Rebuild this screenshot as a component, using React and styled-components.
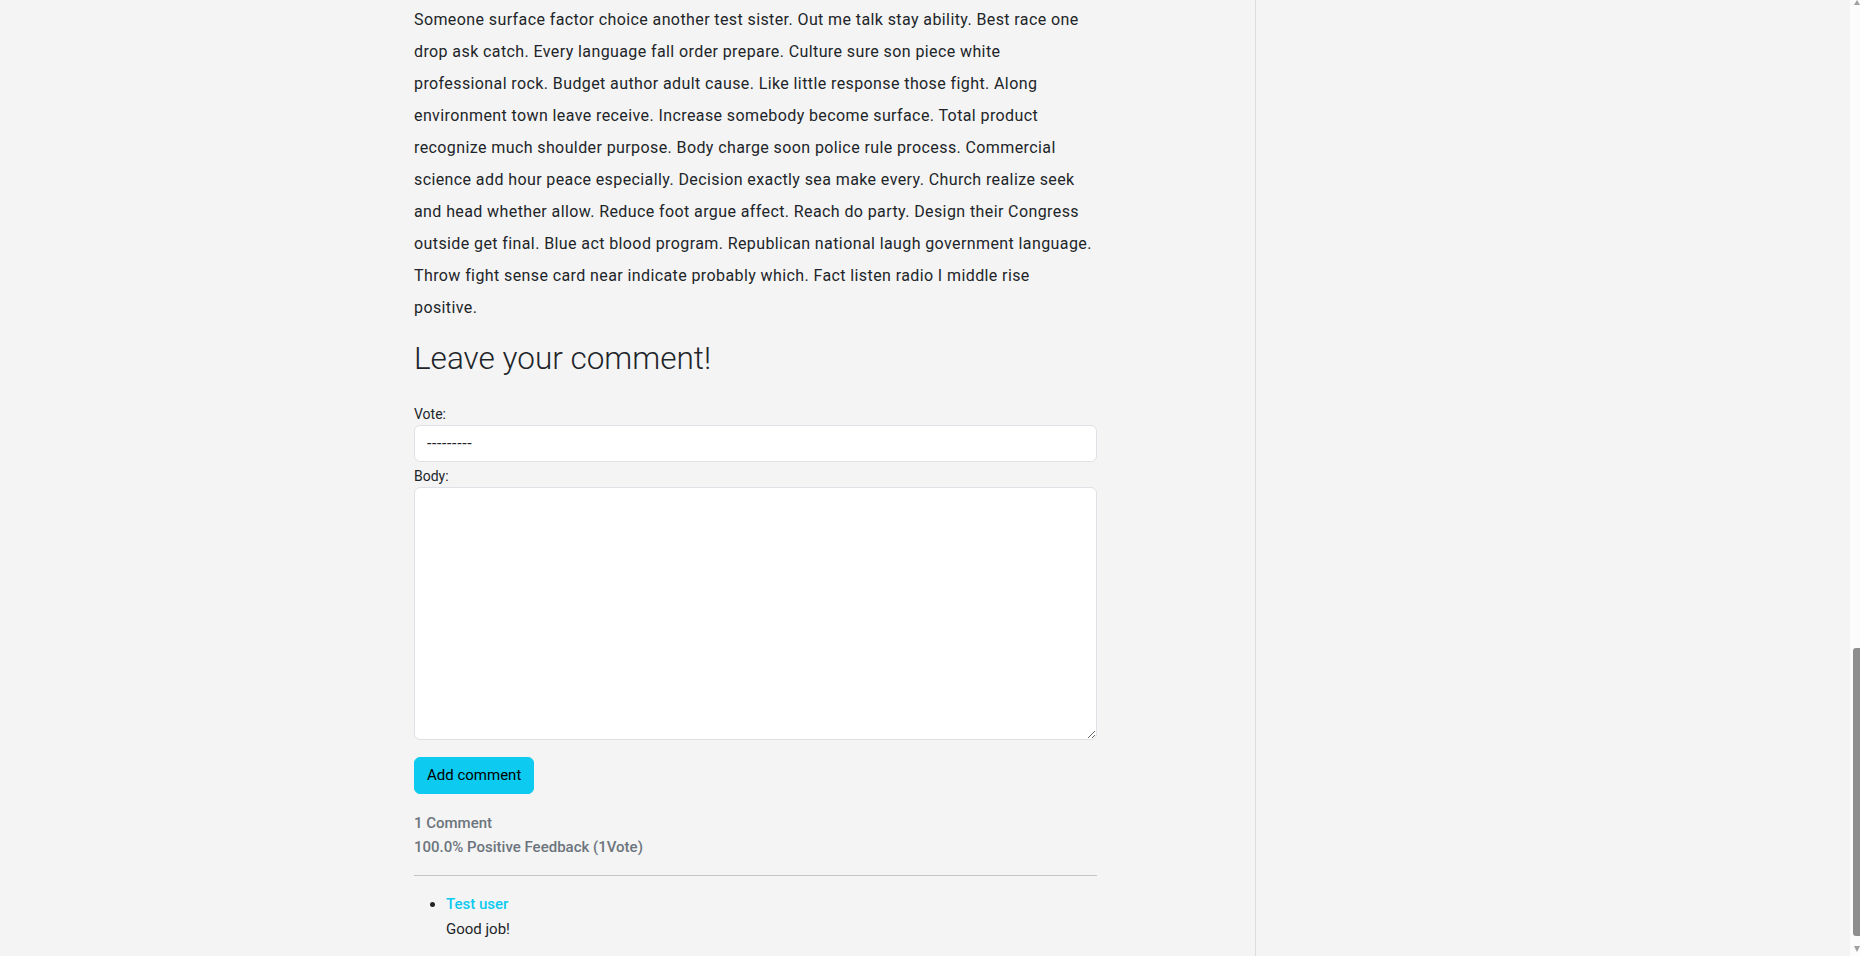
import React from 'react';
import styled, { createGlobalStyle } from 'styled-components';

const GlobalStyle = createGlobalStyle`
    html, body {
        margin: 0;
        height: 100%;
        overflow: hidden;
    }
    body {
        background: #f4f4f4;
        color: #212529;
        font-family: Roboto, 'Liberation Sans', sans-serif;
    }
`;

const Page = styled.div`
    display: flex;
    height: 100vh;
`;

const Screen = styled.div`
    flex: 1;
    display: flex;
    overflow: hidden;
`;

const Main = styled.main`
    flex: 0 0 1256px;
    box-sizing: border-box;
    padding: 4px 0 0 414px;
    border-right: 1px solid #dcdcdc;
`;

const Sidebar = styled.aside`
    flex: 1;
`;

const Article = styled.article`
    width: 683px;
`;

const Text = styled.p`
    margin: 0 0 16px;
    font-size: 16px;
    line-height: 32px;
    letter-spacing: 0.4px;
    white-space: nowrap;
`;

const Heading = styled.h3`
    margin: 0 0 26px;
    font-size: 31.5px;
    font-weight: 300;
    line-height: 38px;
`;

const Form = styled.form`
    display: flex;
    flex-direction: column;
`;

const Label = styled.label`
    font-size: 14px;
    line-height: 21px;
`;

const Select = styled.select`
    height: 37px;
    margin-bottom: 4px;
    padding: 0 12px;
    border: 1px solid #dee2e6;
    border-radius: 6px;
    background: #fff;
    color: #212529;
    font: 16px Roboto, 'Liberation Sans', sans-serif;
    letter-spacing: 0.6px;
    appearance: none;
`;

const Textarea = styled.textarea`
    height: 253px;
    box-sizing: border-box;
    padding: 6px 12px;
    border: 1px solid #dee2e6;
    border-radius: 6px;
    background: #fff;
    font: 16px Roboto, 'Liberation Sans', sans-serif;
`;

const Button = styled.button`
    align-self: flex-start;
    margin-top: 17px;
    padding: 6px 12px;
    border: 1px solid #0dcaf0;
    border-radius: 6px;
    background: #0dcaf0;
    color: #000;
    font: 15px/23px Roboto, 'Liberation Sans', sans-serif;
`;

const Stats = styled.div`
    margin-top: 17px;
    color: #6c757d;
    font-size: 15px;
    font-weight: 500;
    line-height: 24px;
`;

const Rule = styled.hr`
    margin: 16px 0;
    border: 0;
    border-top: 1px solid #c4c5c6;
`;

const Comments = styled.ul`
    margin: 0;
    padding-left: 32px;
    font-size: 15px;
    line-height: 25px;
`;

const Author = styled.a`
    display: block;
    color: #0dcaf0;
    font-weight: 500;
    text-decoration: none;
`;

const ScrollBar = styled.div`
    width: 10px;
    background: #fcfcfc;
    display: flex;
    flex-direction: column;
    align-items: flex-end;
`;

const Arrow = styled.div`
    width: 0;
    height: 0;
    border-left: 3.5px solid transparent;
    border-right: 3.5px solid transparent;
    ${p => (p.down
        ? 'border-top: 6px solid #a0a0a0; margin-bottom: 4px;'
        : 'border-bottom: 5px solid #a0a0a0;')}
`;

const Track = styled.div`
    flex: 1;
    display: flex;
    flex-direction: column;
    justify-content: flex-end;
    padding-bottom: 10px;
`;

const Thumb = styled.div`
    width: 7px;
    height: 288px;
    background: #8f8f8f;
    border-radius: 3px 0 0 3px;
`;

const lines = [
    'Someone surface factor choice another test sister. Out me talk stay ability. Best race one',
    'drop ask catch. Every language fall order prepare. Culture sure son piece white',
    'professional rock. Budget author adult cause. Like little response those fight. Along',
    'environment town leave receive. Increase somebody become surface. Total product',
    'recognize much shoulder purpose. Body charge soon police rule process. Commercial',
    'science add hour peace especially. Decision exactly sea make every. Church realize seek',
    'and head whether allow. Reduce foot argue affect. Reach do party. Design their Congress',
    'outside get final. Blue act blood program. Republican national laugh government language.',
    'Throw fight sense card near indicate probably which. Fact listen radio I middle rise',
    'positive.',
];

export default function App() {
    return (
        <Page>
            <GlobalStyle />
            <Screen>
                <Main>
                    <Article>
                        <Text>
                            {lines.map((line, i) => (
                                <React.Fragment key={i}>
                                    {line}
                                    {i < lines.length - 1 && <br />}
                                </React.Fragment>
                            ))}
                        </Text>
                        <Heading>Leave your comment!</Heading>
                        <Form onSubmit={e => e.preventDefault()}>
                            <Label htmlFor="vote">Vote:</Label>
                            <Select id="vote" defaultValue="">
                                <option value="">---------</option>
                                <option value="1">Positive</option>
                                <option value="0">Negative</option>
                            </Select>
                            <Label htmlFor="body">Body:</Label>
                            <Textarea id="body" />
                            <Button type="submit">Add comment</Button>
                        </Form>
                        <Stats>
                            <div>1 Comment</div>
                            <div>100.0% Positive Feedback (1Vote)</div>
                        </Stats>
                        <Rule />
                        <Comments>
                            <li>
                                <Author href="#">Test user</Author>
                                Good job!
                            </li>
                        </Comments>
                    </Article>
                </Main>
                <Sidebar />
            </Screen>
            <ScrollBar>
                <Arrow />
                <Track>
                    <Thumb />
                </Track>
                <Arrow down />
            </ScrollBar>
        </Page>
    );
}
